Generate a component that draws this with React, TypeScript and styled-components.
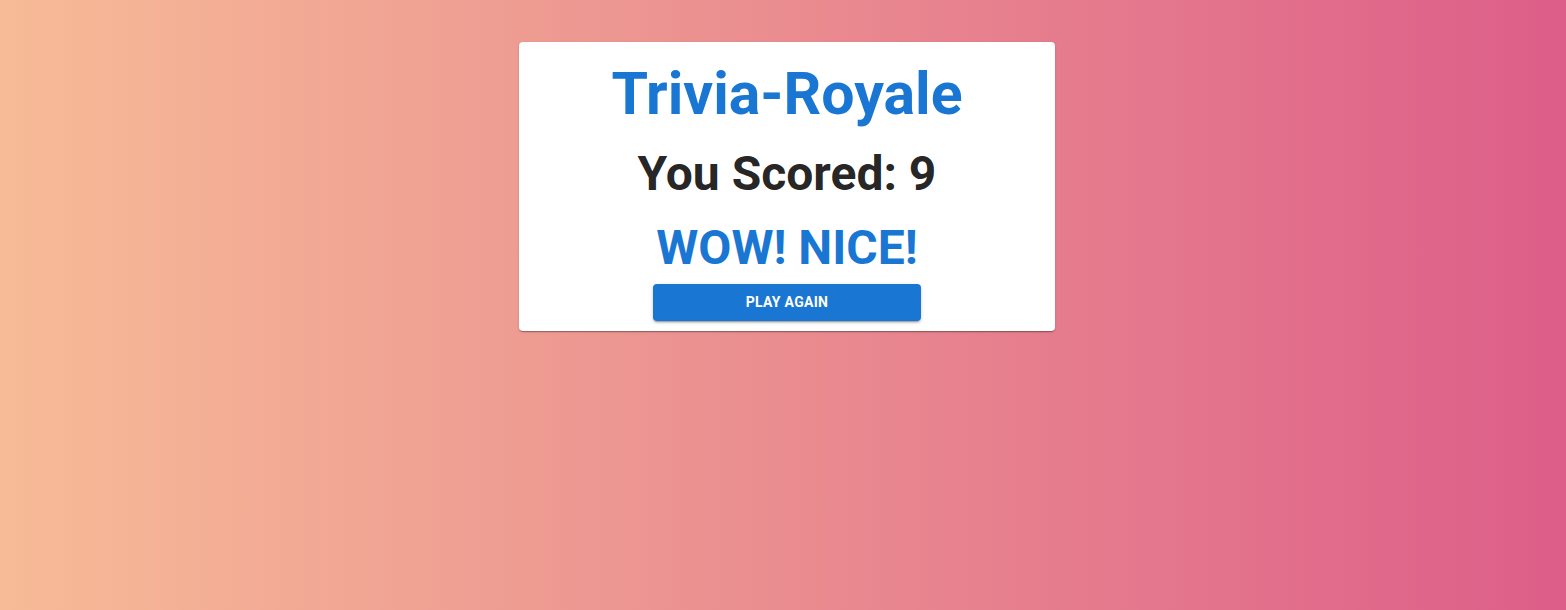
import React from "react";
import styled, { createGlobalStyle } from "styled-components";

const Global = createGlobalStyle`
  html, body {
    margin: 0;
    padding: 0;
    height: 100%;
  }
  body {
    font-family: Roboto, "Liberation Sans", Arial, sans-serif;
    background: linear-gradient(to right, #f7bb97, #dd5e89);
    min-height: 610px;
  }
`;

const Page = styled.main`
  display: flex;
  justify-content: center;
  padding: 42px 0 0 8px;
`;

const Card = styled.section`
  width: 536px;
  box-sizing: border-box;
  background: #fff;
  border-radius: 4px;
  box-shadow: 0px 2px 1px -1px rgba(0, 0, 0, 0.2), 0px 1px 1px 0px rgba(0, 0, 0, 0.14),
    0px 1px 3px 0px rgba(0, 0, 0, 0.12);
  display: flex;
  flex-direction: column;
  align-items: center;
  padding: 16px 0 10px;
`;

const Title = styled.h1`
  margin: 0;
  font-size: 59px;
  line-height: 72px;
  font-weight: 700;
  color: #1976d2;
`;

const Heading = styled.h2<{ $color: string; $gap: number }>`
  margin: ${(p) => p.$gap}px 0 0;
  font-size: 48px;
  line-height: 56px;
  font-weight: 700;
  color: ${(p) => p.$color};
`;

const Button = styled.button`
  margin-top: 8px;
  width: 268px;
  height: 37px;
  padding: 0 0 2px;
  border: 0;
  border-radius: 4px;
  background: #1976d2;
  color: #fff;
  font-family: Roboto, "Liberation Sans", Arial, sans-serif;
  font-size: 14px;
  font-weight: 700;
  letter-spacing: 0.3px;
  text-transform: uppercase;
  cursor: pointer;
  box-shadow: 0px 3px 1px -2px rgba(0, 0, 0, 0.2), 0px 2px 2px 0px rgba(0, 0, 0, 0.14),
    0px 1px 5px 0px rgba(0, 0, 0, 0.12);
`;

export default function App() {
  return (
    <>
      <Global />
      <Page>
        <Card>
          <Title>Trivia-Royale</Title>
          <Heading $color="rgba(0,0,0,0.87)" $gap={16}>You Scored: 9</Heading>
          <Heading $color="#1976d2" $gap={18}>WOW! NICE!</Heading>
          <Button>Play Again</Button>
        </Card>
      </Page>
    </>
  );
}
